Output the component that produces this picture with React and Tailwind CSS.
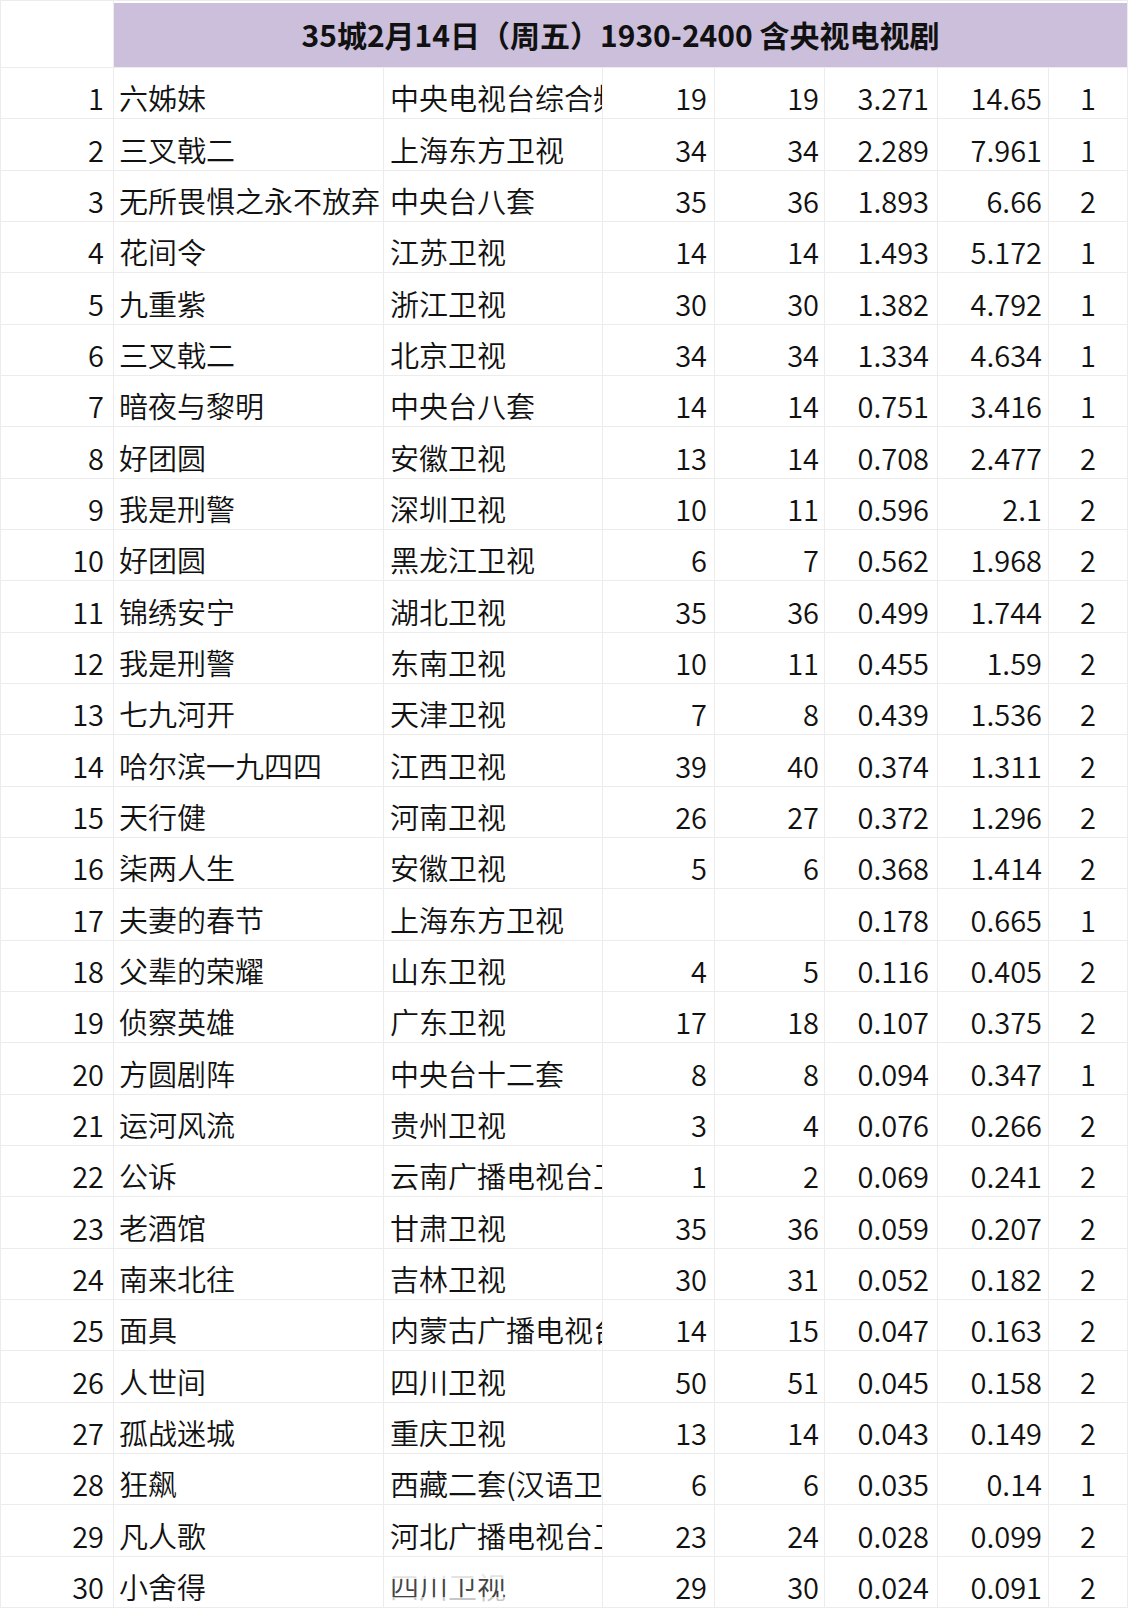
import React from "react";

const rows = [
  [1, "六姊妹", "中央电视台综合频道", "19", "19", "3.271", "14.65", "1"],
  [2, "三叉戟二", "上海东方卫视", "34", "34", "2.289", "7.961", "1"],
  [3, "无所畏惧之永不放弃", "中央台八套", "35", "36", "1.893", "6.66", "2"],
  [4, "花间令", "江苏卫视", "14", "14", "1.493", "5.172", "1"],
  [5, "九重紫", "浙江卫视", "30", "30", "1.382", "4.792", "1"],
  [6, "三叉戟二", "北京卫视", "34", "34", "1.334", "4.634", "1"],
  [7, "暗夜与黎明", "中央台八套", "14", "14", "0.751", "3.416", "1"],
  [8, "好团圆", "安徽卫视", "13", "14", "0.708", "2.477", "2"],
  [9, "我是刑警", "深圳卫视", "10", "11", "0.596", "2.1", "2"],
  [10, "好团圆", "黑龙江卫视", "6", "7", "0.562", "1.968", "2"],
  [11, "锦绣安宁", "湖北卫视", "35", "36", "0.499", "1.744", "2"],
  [12, "我是刑警", "东南卫视", "10", "11", "0.455", "1.59", "2"],
  [13, "七九河开", "天津卫视", "7", "8", "0.439", "1.536", "2"],
  [14, "哈尔滨一九四四", "江西卫视", "39", "40", "0.374", "1.311", "2"],
  [15, "天行健", "河南卫视", "26", "27", "0.372", "1.296", "2"],
  [16, "柒两人生", "安徽卫视", "5", "6", "0.368", "1.414", "2"],
  [17, "夫妻的春节", "上海东方卫视", "", "", "0.178", "0.665", "1"],
  [18, "父辈的荣耀", "山东卫视", "4", "5", "0.116", "0.405", "2"],
  [19, "侦察英雄", "广东卫视", "17", "18", "0.107", "0.375", "2"],
  [20, "方圆剧阵", "中央台十二套", "8", "8", "0.094", "0.347", "1"],
  [21, "运河风流", "贵州卫视", "3", "4", "0.076", "0.266", "2"],
  [22, "公诉", "云南广播电视台卫视频道", "1", "2", "0.069", "0.241", "2"],
  [23, "老酒馆", "甘肃卫视", "35", "36", "0.059", "0.207", "2"],
  [24, "南来北往", "吉林卫视", "30", "31", "0.052", "0.182", "2"],
  [25, "面具", "内蒙古广播电视台卫视", "14", "15", "0.047", "0.163", "2"],
  [26, "人世间", "四川卫视", "50", "51", "0.045", "0.158", "2"],
  [27, "孤战迷城", "重庆卫视", "13", "14", "0.043", "0.149", "2"],
  [28, "狂飙", "西藏二套(汉语卫视)", "6", "6", "0.035", "0.14", "1"],
  [29, "凡人歌", "河北广播电视台卫视", "23", "24", "0.028", "0.099", "2"],
  [30, "小舍得", "四川卫视", "29", "30", "0.024", "0.091", "2"],
];

const font = { fontFamily: '"Noto Sans CJK SC", "Noto Sans", sans-serif' };

const cell =
  "h-[51.33px] border-r border-b border-[#ececec] flex items-end pb-[6px] overflow-hidden whitespace-nowrap text-[29px] leading-none font-[350] text-[#111]";

export default function App() {
  return (
    <div className="w-[1129px] h-[1611px] bg-white" style={font}>
      <div className="grid grid-cols-[113px_270px_219px_112px_110px_113px_111px_79px] border-l border-[#ececec]">
        <div className="h-[68px] border-r border-b border-t border-[#ececec]" />
        <div className="col-span-7 h-[68px] pt-[2px] border-b border-t border-r border-[#ececec]">
          <div className="h-full bg-[#cbbfdb] flex items-center justify-center text-[30px] font-bold leading-none text-[#111] pb-[2px]">
            35城2月14日（周五）1930-2400 含央视电视剧
          </div>
        </div>
        {rows.map((r) => (
          <React.Fragment key={r[0]}>
            <div className={cell + " justify-end pr-[9px]"}>{r[0]}</div>
            <div className={cell + " pl-[5px]"}>{r[1]}</div>
            <div className={cell + " pl-[6px] relative"}>
              <span className={r[0] === 30 ? "text-[#444]" : ""}>{r[2]}</span>
              {r[0] === 30 && (
                <>
                  <div className="absolute left-0 right-0 top-[8px] h-[14px] bg-white/85" />
                  <div className="absolute left-0 right-0 top-[40px] h-[8px] bg-white/70" />
                </>
              )}
            </div>
            <div className={cell + " justify-end pr-[7px]"}>{r[3]}</div>
            <div className={cell + " justify-end pr-[5px]"}>{r[4]}</div>
            <div className={cell + " justify-end pr-[8px]"}>{r[5]}</div>
            <div className={cell + " justify-end pr-[6px]"}>{r[6]}</div>
            <div className={cell + " justify-end pr-[31px]"}>{r[7]}</div>
          </React.Fragment>
        ))}
      </div>
    </div>
  );
}
